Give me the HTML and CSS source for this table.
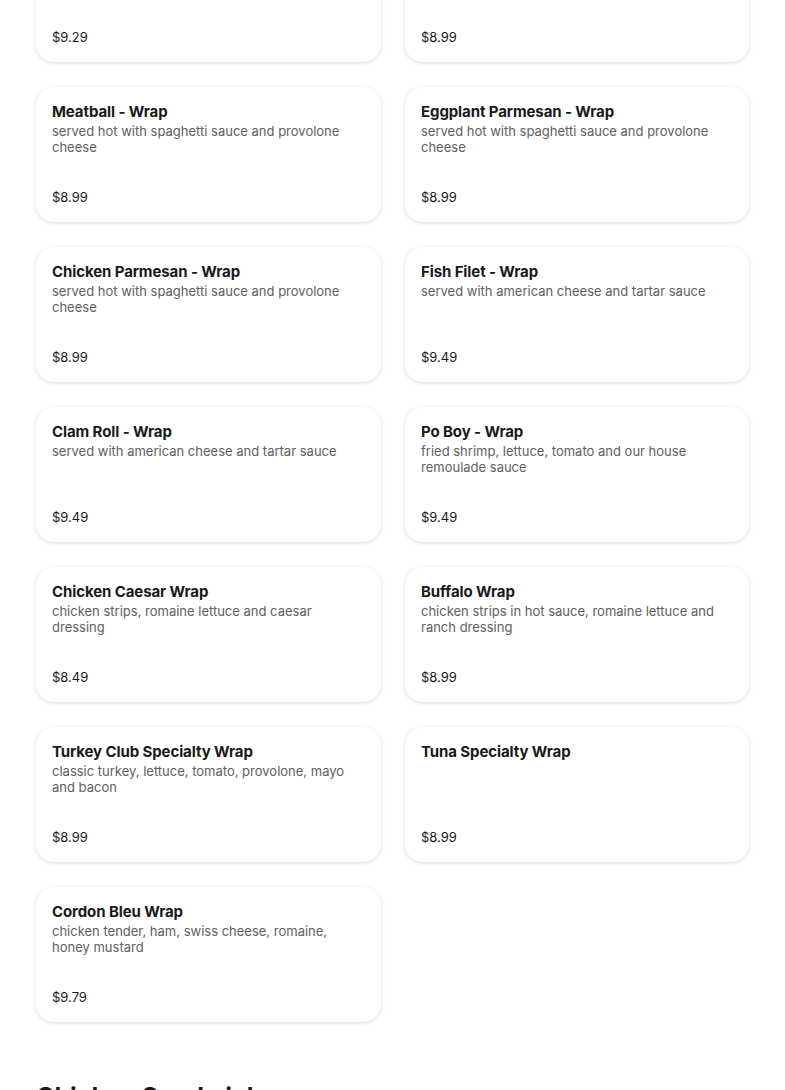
FILE: index.html
```html
<!DOCTYPE html>
<html lang="en">
<head>
<meta charset="utf-8">
<title>Wraps</title>
<link rel="stylesheet" href="styles.css">
</head>
<body>
<main class="page">
  <section class="grid">
    <article class="card"><span class="price">$9.29</span></article>
    <article class="card"><span class="price">$8.99</span></article>
    <article class="card"><h3 class="title">Meatball - Wrap</h3><p class="desc">served hot with spaghetti sauce and provolone cheese</p><span class="price">$8.99</span></article>
    <article class="card"><h3 class="title">Eggplant Parmesan - Wrap</h3><p class="desc">served hot with spaghetti sauce and provolone cheese</p><span class="price">$8.99</span></article>
    <article class="card"><h3 class="title">Chicken Parmesan - Wrap</h3><p class="desc">served hot with spaghetti sauce and provolone cheese</p><span class="price">$8.99</span></article>
    <article class="card"><h3 class="title">Fish Filet - Wrap</h3><p class="desc">served with american cheese and tartar sauce</p><span class="price">$9.49</span></article>
    <article class="card"><h3 class="title">Clam Roll - Wrap</h3><p class="desc">served with american cheese and tartar sauce</p><span class="price">$9.49</span></article>
    <article class="card"><h3 class="title">Po Boy - Wrap</h3><p class="desc">fried shrimp, lettuce, tomato and our house remoulade sauce</p><span class="price">$9.49</span></article>
    <article class="card"><h3 class="title">Chicken Caesar Wrap</h3><p class="desc">chicken strips, romaine lettuce and caesar dressing</p><span class="price">$8.49</span></article>
    <article class="card"><h3 class="title">Buffalo Wrap</h3><p class="desc">chicken strips in hot sauce, romaine lettuce and ranch dressing</p><span class="price">$8.99</span></article>
    <article class="card"><h3 class="title">Turkey Club Specialty Wrap</h3><p class="desc">classic turkey, lettuce, tomato, provolone, mayo and bacon</p><span class="price">$8.99</span></article>
    <article class="card"><h3 class="title">Tuna Specialty Wrap</h3><p class="desc"></p><span class="price">$8.99</span></article>
    <article class="card"><h3 class="title">Cordon Bleu Wrap</h3><p class="desc">chicken tender, ham, swiss cheese, romaine, honey mustard</p><span class="price">$9.79</span></article>
  </section>
  <h2 class="section-title">Chicken Sandwiches</h2>
</main>
</body>
</html>
```
FILE: styles.css
```css
html, body {
  margin: 0;
  padding: 0;
  background: #ffffff;
}
body {
  font-family: Inter, "Noto Sans", "Liberation Sans", sans-serif;
  color: #191919;
  overflow: hidden;
}
.page {
  padding: 0 36px;
  margin-top: -73px;
}
.grid {
  display: grid;
  grid-template-columns: 345px 344px;
  column-gap: 24px;
  row-gap: 25px;
}
.card {
  box-sizing: border-box;
  height: 135px;
  padding: 15px 16px 15px;
  border-radius: 18px;
  background: #fff;
  box-shadow: 0 1px 4px rgba(0, 0, 0, 0.14);
  display: flex;
  flex-direction: column;
}
.title {
  margin: 0;
  font-size: 15px;
  line-height: 20px;
  font-weight: 700;
  color: #191919;
  letter-spacing: -0.1px;
}
.desc {
  margin: 1px 0 0;
  font-size: 13px;
  line-height: 16px;
  color: #606060;
}
.price {
  margin-top: auto;
  font-size: 13px;
  line-height: 20px;
  color: #191919;
}
.section-title {
  margin: 59px 0 0;
  font-size: 25px;
  line-height: 32px;
  font-weight: 700;
  color: #191919;
}
```
